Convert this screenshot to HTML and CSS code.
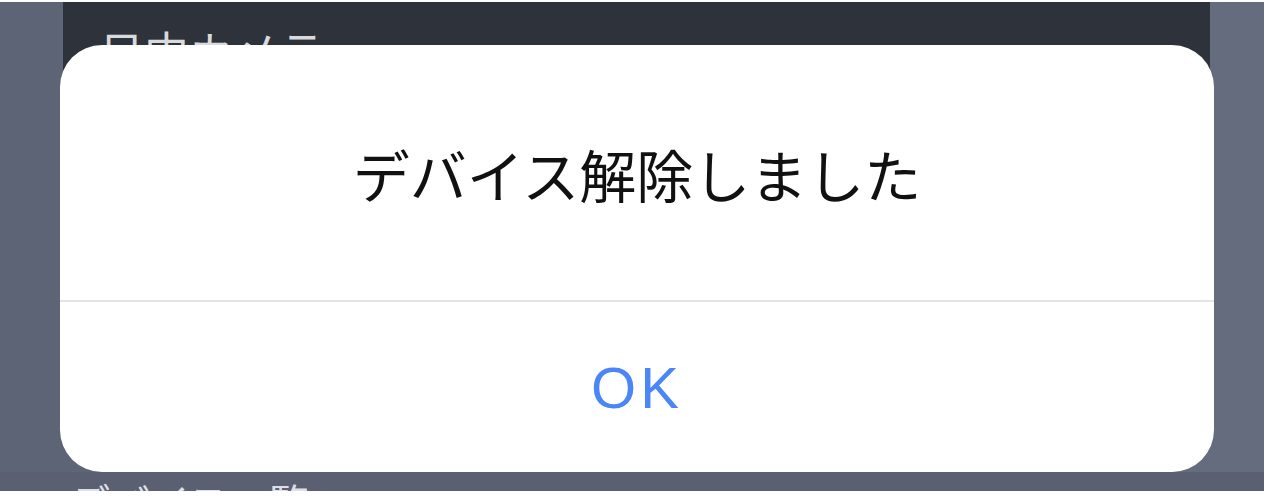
FILE: index.html
```html
<!DOCTYPE html>
<html>
<head>
    <meta charset="utf-8">
    <link rel="stylesheet" href="styles.css">
</head>
<body>
    <div class="screen">
        <div class="backdrop">
            <div class="panel">
                <p class="panel-title">日中カメラ</p>
            </div>
            <div class="list-row">
                <p class="row-label">デバイス一覧</p>
            </div>
        </div>
        <div class="alert">
            <div class="alert-body">
                <p class="alert-message">デバイス解除しました</p>
            </div>
            <button class="alert-button">OK</button>
        </div>
    </div>
</body>
</html>
```

FILE: styles.css
```css
body {
    margin: 0;
    background-color: #fff;
    font-family: "Noto Sans CJK JP", sans-serif;
}
.screen {
    position: relative;
    width: 1264px;
    height: 489px;
    margin-top: 2px;
    overflow: hidden;
    background: linear-gradient(90deg, #5d6475, #656c7d);
}
.backdrop {
    display: flex;
    flex-direction: column;
    justify-content: space-between;
    height: 100%;
}
.panel {
    flex-shrink: 0;
    box-sizing: border-box;
    height: 300px;
    margin: 0 54px 0 63px;
    padding: 22px 36px 0;
    background-color: #2e323b;
}
.panel-title {
    margin: 0;
    font-size: 45px;
    line-height: 1.2;
    color: #d9dadd;
}
.list-row {
    flex-shrink: 0;
    height: 14px;
    padding: 5px 0 0 70px;
    overflow: hidden;
    background-color: #5a6071;
}
.row-label {
    margin: 0;
    font-size: 40px;
    line-height: 1.2;
    color: #dcdfe5;
}
.alert {
    position: absolute;
    left: 60px;
    top: 43px;
    width: 1154px;
    height: 427px;
    display: flex;
    flex-direction: column;
    background-color: #fff;
    border-radius: 42px;
    overflow: hidden;
}
.alert-body {
    height: 257px;
    display: flex;
    align-items: center;
    justify-content: center;
    padding-top: 2px;
    box-sizing: border-box;
    border-bottom: 2px solid #e4e4e6;
}
.alert-message {
    margin: 0;
    font-size: 57px;
    line-height: 1;
    color: #111;
}
.alert-button {
    flex: 1;
    border: none;
    background: none;
    font-family: "Liberation Sans", Arial, sans-serif;
    font-size: 58px;
    letter-spacing: 4px;
    color: #4a86f7;
    cursor: pointer;
}
```
